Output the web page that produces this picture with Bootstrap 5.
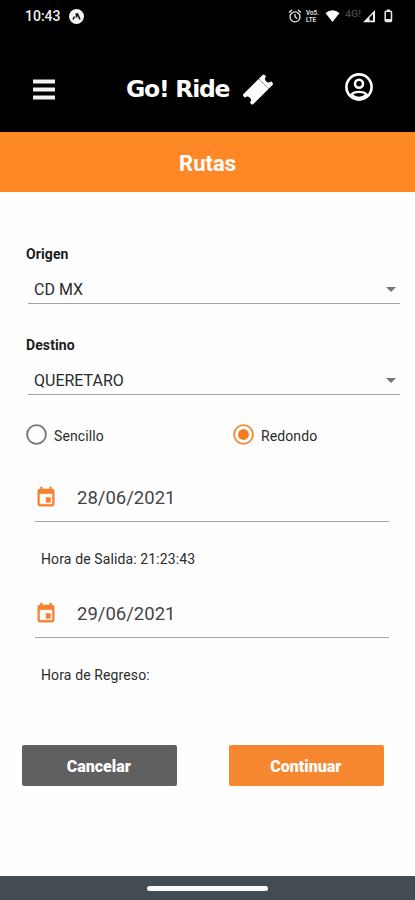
<!DOCTYPE html>
<html lang="es">
<head>
<meta charset="utf-8">
<meta name="viewport" content="width=device-width, initial-scale=1">
<title>Go! Ride - Rutas</title>
<link href="https://cdn.jsdelivr.net/npm/bootstrap@5.3.0/dist/css/bootstrap.min.css" rel="stylesheet">
<style>
  body { font-family: Roboto, sans-serif; color: #2b2b2b; background: #fefefe; height: 900px; overflow: hidden; line-height: 1; }
  svg { display: block; flex: none; }
  .status { height: 44px; padding: 0 22px 12px 25px; font-size: 14px; font-weight: 500; color: #eee; }
  .status-time { width: 36px; white-space: nowrap; }
  .app-nav { height: 88px; padding: 2px 42px 0 33px; }
  .menu-icon { margin-top: 2px; }
  .user-icon { margin-bottom: 4px; }
  .brand { font-family: "DejaVu Sans", sans-serif; font-weight: 700; font-size: 23.5px; letter-spacing: -1.25px; width: 104px; white-space: nowrap; padding-top: 2px; }
  .title-bar { height: 60px; background: #ff8826; font-size: 22px; font-weight: 700; padding-top: 3px; }
  .form-area { padding: 54px 15px 0 26px; }
  .field-label { font-size: 14px; font-weight: 700; color: #1c1c1c; height: 16px; line-height: 16px; letter-spacing: .1px; }
  .picker { height: 42px; margin: 0 0 0 2px; padding: 13px 4px 0 6px; border-bottom: 1.5px solid #a2a2a2; font-size: 16px; }
  .picker span { padding-top: 2px; }
  .field-gap { margin-bottom: 33px; }
  .options { height: 22px; margin-top: 28px; }
  .options .opt { flex: none; font-size: 14px; letter-spacing: .1px; }
  .options .opt:first-child { width: 207px; }
  .options .opt span { padding: 4px 0 0 7px; }
  .date-row { height: 38px; margin: 33px 11px 0 9px; padding: 0 0 10px 0; border-bottom: 1.5px solid #a8a8a8; font-size: 18.5px; color: #444; }
  .date-first { margin-top: 39px; }
  .date-row span { margin-left: 20px; padding-top: 2px; }
  .hour { font-size: 14px; height: 16px; line-height: 16px; margin: 29px 0 0 15px; letter-spacing: .12px; }
  .actions { padding: 0 31px 0 21.5px; margin-top: 62px; }
  .actions .btn { width: 155.500px; height: 41px; font-size: 16px; font-weight: 900; border: 0; border-radius: 2px; color: #fff; padding: 2px 1px 0 0; }
  .btn-cancel, .btn-cancel:hover { background: #606060; }
  .btn-go, .btn-go:hover { background: #f68730; }
  .sys-bar { height: 24px; background: #444c53; }
  .sys-bar div { width: 121px; height: 5px; background: #f8fafb; }
</style>
<script src="https://cdn.jsdelivr.net/npm/bootstrap@5.3.0/dist/js/bootstrap.bundle.min.js"></script>
</head>
<body class="d-flex flex-column">
<header class="bg-black text-white">
  <div class="status d-flex align-items-center">
    <span class="status-time">10:43</span>
    <svg class="ms-2" width="15" height="15" viewBox="0 0 15 15"><circle cx="7.5" cy="7.5" r="7.5" fill="#f4f4f4"/><path d="M4 10.500 5.500 7.500M6.500 5h2L11 10.500M7.500 5.500V8.500" fill="none" stroke="#111" stroke-width="1.600"/></svg>
    <div class="ms-auto d-flex align-items-center">
      <svg width="106" height="16" viewBox="0 0 106 16">
        <g fill="none" stroke="#e6e6e6" stroke-width="1.300"><circle cx="8" cy="8.800" r="5"/><path d="M8 6v3l2.200 1.400M2 4.500 5 2M14 4.500 11 2"/></g>
        <g fill="#ddd" font-family="Roboto, sans-serif" font-weight="700"><text x="19" y="7" font-size="6.500" textLength="13" lengthAdjust="spacingAndGlyphs">Vo5.</text><text x="19" y="13.500" font-size="7" textLength="10" lengthAdjust="spacingAndGlyphs">LTE</text></g>
        <path d="M38.500 5Q45.500-.5 52.500 5L45.500 14Z" fill="#fff"/>
        <text x="58" y="9" font-family="Roboto, sans-serif" font-size="9" font-weight="500" fill="#484848" textLength="16" lengthAdjust="spacingAndGlyphs">4G!</text>
        <path d="M76 14.300 88 2v12.300Z" fill="#eee"/><path d="M82.500 12.500V9.500L86 6v6.500Z" fill="#000"/>
        <rect x="98.200" y="3.200" width="6.300" height="10.300" rx="1" fill="none" stroke="#e8e8e8" stroke-width="1.500"/><path d="M99.800 1.500h3.200v2h-3.200zM98 11h6.500v2.500H98z" fill="#e8e8e8"/>
      </svg>
    </div>
  </div>
  <nav class="app-nav navbar d-flex align-items-center flex-nowrap">
    <svg class="menu-icon" width="22" height="22" viewBox="0 0 22 22"><path d="M0 2.500h22M0 10.500h22M0 18.500h22" stroke="#f2f2f2" stroke-width="4"/></svg>
    <div class="d-flex align-items-center">
      <span class="brand">Go! Ride</span>
      <svg class="ms-2" width="36" height="34" viewBox="0 0 36 34"><g transform="translate(20 17.500) rotate(-45)" fill="#fff"><path d="M-15-5.500Q-15-7-13.500-7h27q1.500 0 1.500 1.500V-3.500a3.500 3.500 0 0 0 0 7v2q0 1.500-1.500 1.500h-27q-1.500 0-1.500-1.500V3.500a3.500 3.500 0 0 0 0-7Z"/><path d="M8-7V7" stroke="#333" stroke-width=".8" stroke-dasharray="1.500 .7"/></g></svg>
    </div>
    <svg class="user-icon" width="28" height="28" viewBox="0 0 28 28" fill="none" stroke="#fff" stroke-width="2.600"><circle cx="14" cy="14" r="12.600"/><circle cx="14" cy="10.700" r="4"/><path d="M6.500 21.500Q8.500 18.800 14 18.800T21.500 21.500Q18.500 24.800 14 24.800T6.500 21.500Z" stroke-width="2.200"/></svg>
  </nav>
</header>
<div class="title-bar text-white d-flex align-items-center justify-content-center">Rutas</div>
<main class="form-area">
  <div class="field-label">Origen</div>
  <div class="picker field-gap d-flex align-items-center justify-content-between"><span>CD MX</span><svg width="10" height="5" viewBox="0 0 10 5"><path d="M0 0h10L5 5Z" fill="#777"/></svg></div>
  <div class="field-label">Destino</div>
  <div class="picker d-flex align-items-center justify-content-between"><span>QUERETARO</span><svg width="10" height="5" viewBox="0 0 10 5"><path d="M0 0h10L5 5Z" fill="#777"/></svg></div>
  <div class="options d-flex">
    <div class="opt d-flex align-items-center"><svg width="21" height="21" viewBox="0 0 21 21"><circle cx="10.500" cy="10.500" r="9.400" fill="none" stroke="#737373" stroke-width="1.800"/></svg><span>Sencillo</span></div>
    <div class="opt d-flex align-items-center"><svg width="21" height="21" viewBox="0 0 21 21"><circle cx="10.500" cy="10.500" r="9.400" fill="none" stroke="#f58a35" stroke-width="1.900"/><circle cx="10.500" cy="10.500" r="5.400" fill="#f47c20"/></svg><span>Redondo</span></div>
  </div>
  <div class="date-row date-first d-flex align-items-center"><svg width="22" height="23" viewBox="0 0 24 24" preserveAspectRatio="none"><path fill="#f58230" stroke="#f58230" stroke-width=".5" d="M17 12h-5v5h5v-5zM16 1v2H8V1H6v2H5c-1.110 0-2 .9-2 2v14c0 1.100.89 2 2 2h14c1.100 0 2-.9 2-2V5c0-1.100-.9-2-2-2h-1V1h-2zm3 18H5V8h14v11z"/></svg><span>28/06/2021</span></div>
  <div class="hour">Hora de Salida: 21:23:43</div>
  <div class="date-row d-flex align-items-center"><svg width="22" height="23" viewBox="0 0 24 24" preserveAspectRatio="none"><path fill="#f58230" stroke="#f58230" stroke-width=".5" d="M17 12h-5v5h5v-5zM16 1v2H8V1H6v2H5c-1.110 0-2 .9-2 2v14c0 1.100.89 2 2 2h14c1.100 0 2-.9 2-2V5c0-1.100-.9-2-2-2h-1V1h-2zm3 18H5V8h14v11z"/></svg><span>29/06/2021</span></div>
  <div class="hour">Hora de Regreso:</div>
</main>
<div class="actions d-flex justify-content-between">
  <button type="button" class="btn btn-cancel">Cancelar</button>
  <button type="button" class="btn btn-go">Continuar</button>
</div>
<footer class="sys-bar mt-auto d-flex align-items-center justify-content-center"><div class="rounded-pill"></div></footer>
</body>
</html>
